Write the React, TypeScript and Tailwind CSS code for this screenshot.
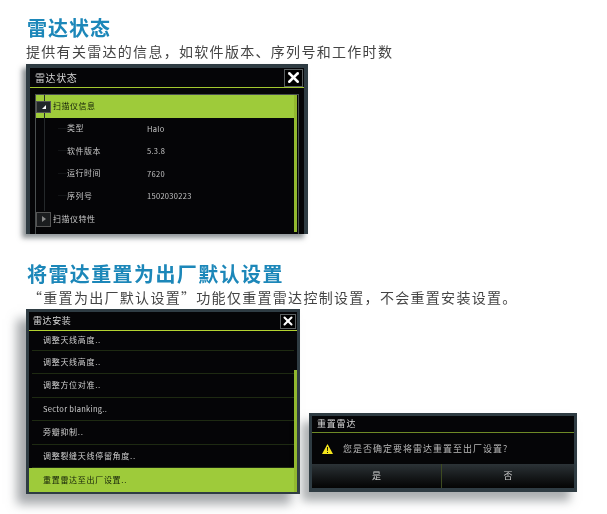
import { X } from 'lucide-react';

const CJK = "font-['Noto_Sans_CJK_SC','Liberation_Sans',sans-serif]";

const infoRows = [
  ['类型', 'Halo'],
  ['软件版本', '5.3.8'],
  ['运行时间', '7620'],
  ['序列号', '1502030223'],
];

const installRows = [
  '调整天线高度..',
  '调整方位对准..',
  'Sector blanking..',
  '旁瓣抑制..',
  '调整裂缝天线停留角度..',
];

const CloseButton = ({ large }: { large?: boolean }) => (
  <div
    className={`flex items-center justify-center border border-[#5a5f60] bg-black ${
      large ? 'h-[18px] w-[19px]' : 'h-[15px] w-[16px]'
    }`}
  >
    <X size={large ? 17 : 14} strokeWidth={3.5} className="text-white" />
  </div>
);

const StatusDialog = () => (
  <div className="mt-1 ml-[26px] h-[170px] w-[282px] border-4 border-b-0 border-[#2f3c43] bg-[#050507] shadow-[-4px_4px_5px_rgba(50,60,65,0.55)] overflow-hidden">
    <div className="flex h-[19px] items-center justify-between pl-[5px] pr-px">
      <span className="text-[10px] tracking-[0.6px] text-[#d8d8d8]">雷达状态</span>
      <CloseButton large />
    </div>
    <div className="h-px bg-[#a3c92f]" />
    <div className="relative mx-[5px] mt-[6px] h-[150px] border-x border-t border-[#4a4f50]">
      <div className="absolute left-[8px] top-0 h-[116px] w-px bg-[#24282a]" />
      <div className="flex h-[23px] w-[259px] items-center bg-[#9ecb3a]">
        <div className="relative mt-px flex h-[12px] w-[15px] items-center justify-center border border-[#555] bg-[#22272a]">
          <div className="h-0 w-0 border-b-[4px] border-l-[4px] border-b-white border-l-transparent" />
        </div>
        <span className="ml-[2px] pb-px text-[8px] tracking-[0.5px] text-[#14200a]">扫描仪信息</span>
      </div>
      {infoRows.map(([label, value]) => (
        <div key={label} className="flex h-[22.5px] items-center pb-[2px]">
          <div className="ml-[22px] h-px w-[9px] bg-[#121416]" />
          <span className="w-[80px] text-[8px] tracking-[0.5px] text-[#c4c4c4]">{label}</span>
          <span className="text-[7.5px] tracking-[0.3px] text-[#c4c4c4]">{value}</span>
        </div>
      ))}
      <div className="flex h-[22.5px] items-center">
        <div className="flex h-[15px] w-[15px] items-center justify-center border border-[#555] bg-[#1b1d1f]">
          <div className="h-0 w-0 border-y-[3px] border-l-[4px] border-y-transparent border-l-[#8a8a8a]" />
        </div>
        <span className="ml-[2px] pb-px text-[8px] tracking-[0.5px] text-[#c8c8c8]">扫描仪特性</span>
      </div>
      <div className="absolute right-px top-0 h-[137px] w-[3px] bg-[#92b82f]" />
    </div>
  </div>
);

const InstallDialog = () => (
  <div className="h-[185px] w-[274px] shrink-0 border-[3px] border-[#2f3c43] bg-[#050507] shadow-[-9px_10px_10px_rgba(90,95,100,0.55)]">
    <div className="flex h-[18px] items-center justify-between pl-[4px] pr-px">
      <span className="text-[9px] tracking-[0.6px] text-[#d8d8d8]">雷达安装</span>
      <CloseButton />
    </div>
    <div className="h-px bg-[#b3d32f]" />
    <div className="relative h-[161px] overflow-hidden">
      <div className="mx-[3px] flex h-[19.5px] items-center border-b border-[#1e2a12] pb-px pl-[11px]">
        <span className="text-[8px] tracking-[0.7px] text-[#cfcfcf]">调整天线高度..</span>
      </div>
      <div className="mx-[3px] flex h-[23.5px] items-center border-b border-[#1e2a12] pl-[11px]">
        <span className="text-[8px] tracking-[0.7px] text-[#cfcfcf]">调整天线高度..</span>
      </div>
      {installRows.slice(1).map((row) => (
        <div key={row} className="mx-[3px] flex h-[23.5px] items-center border-b border-[#1e2a12] pl-[11px]">
          <span
            className={
              row.startsWith('Sector')
                ? 'text-[7.5px] tracking-[0.3px] text-[#cfcfcf]'
                : 'text-[8px] tracking-[0.7px] text-[#cfcfcf]'
            }
          >
            {row}
          </span>
        </div>
      ))}
      <div className="flex h-[24px] w-[265px] items-center bg-[#9ecb3a] pb-px pl-[14px]">
        <span className="text-[8px] tracking-[0.7px] text-[#14200a]">重置雷达至出厂设置..</span>
      </div>
      <div className="absolute bottom-0 right-0 h-[122px] w-[3px] bg-[#92b82f]" />
    </div>
  </div>
);

const ConfirmDialog = () => (
  <div className="ml-[9px] mb-[2px] h-[79px] w-[268px] border-x-[3px] border-t-[3px] border-b-[4px] border-[#2f3c43] bg-[#050507] shadow-[-7px_9px_9px_rgba(90,95,100,0.5)]">
    <div className="flex h-[16px] items-center pl-[5px]">
      <span className="text-[9px] tracking-[0.8px] text-[#d8d8d8]">重置雷达</span>
    </div>
    <div className="h-px bg-[#6e8a26]" />
    <div className="flex h-[31px] items-center pl-[10px]">
      <svg width="11" height="10" viewBox="0 0 11 10">
        <path d="M5.5 0 L11 10 L0 10 Z" fill="#f5e51c" />
        <path d="M5 3 h1 l-.1 4 h-.8 Z M5 8 h1 v1 h-1 Z" fill="#111" />
      </svg>
      <span className="ml-[10px] text-[9px] tracking-[1px] text-[#b8b8b8]">
        您是否确定要将雷达重置至出厂设置?
      </span>
    </div>
    <div className="flex h-[24px] bg-gradient-to-b from-[#2c3337] to-[#050505] text-[9px] text-[#d0d0d0]">
      <div className="flex w-[130px] items-center justify-center border-r border-[#3d4a20]">是</div>
      <div className="flex flex-1 items-center justify-center">否</div>
    </div>
  </div>
);

export default function App() {
  return (
    <div className={`h-[514px] w-[607px] overflow-hidden bg-white pt-[14px] blur-[0.35px] ${CJK}`}>
      <h1 className="ml-[27px] text-[20px] font-bold leading-[28px] tracking-[1px] text-[#1c87b9]">
        雷达状态
      </h1>
      <p className="ml-[26px] text-[14px] leading-[18px] tracking-[1.3px] text-[#444]">
        提供有关雷达的信息，如软件版本、序列号和工作时数
      </p>
      <StatusDialog />

      <h1 className="ml-[27px] mt-[26px] text-[20px] font-bold leading-[28px] tracking-[1.4px] text-[#1c87b9]">
        将雷达重置为出厂默认设置
      </h1>
      <p className="ml-[28px] text-[14px] leading-[18px] tracking-[1.3px] text-[#444]">
        “重置为出厂默认设置”功能仅重置雷达控制设置，不会重置安装设置。
      </p>
      <div className="ml-[26px] mt-[3px] flex items-end">
        <InstallDialog />
        <ConfirmDialog />
      </div>
    </div>
  );
}
